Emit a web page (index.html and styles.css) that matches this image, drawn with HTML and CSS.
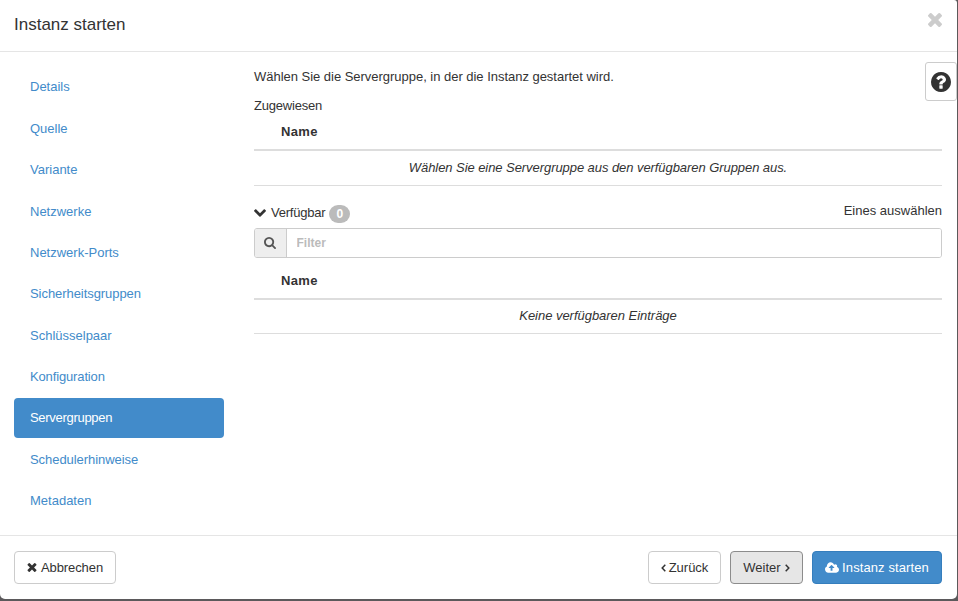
FILE: index.html
```html
<!DOCTYPE html>
<html lang="de">
<head>
<meta charset="utf-8">
<title>Instanz starten</title>
<link rel="stylesheet" href="styles.css">
</head>
<body>
<svg width="0" height="0" class="defs">
  <symbol id="times" viewBox="302 366 1188 1188"><path d="M1490 1322q0 40-28 68l-136 136q-28 28-68 28t-68-28l-294-294-294 294q-28 28-68 28t-68-28l-136-136q-28-28-28-68t28-68l294-294-294-294q-28-28-28-68t28-68l136-136q28-28 68-28t68 28l294 294 294-294q28-28 68-28t68 28l136 136q28 28 28 68t-28 68l-294 294 294 294q28 28 28 68z"/></symbol>
</svg>
<div class="modal">
  <header class="header">
    <h1>Instanz starten</h1>
    <svg class="close"><use href="#times"/></svg>
  </header>
  <div class="body">
    <nav class="steps">
      <a>Details</a>
      <a>Quelle</a>
      <a>Variante</a>
      <a>Netzwerke</a>
      <a>Netzwerk-Ports</a>
      <a class="snug">Sicherheitsgruppen</a>
      <a>Schlüsselpaar</a>
      <a class="tight">Konfiguration</a>
      <a class="active">Servergruppen</a>
      <a class="snug">Schedulerhinweise</a>
      <a>Metadaten</a>
    </nav>
    <main class="content">
      <p class="intro">Wählen Sie die Servergruppe, in der die Instanz gestartet wird.</p>
      <div class="label">Zugewiesen</div>
      <div class="thead">Name</div>
      <div class="empty first">Wählen Sie eine Servergruppe aus den verfügbaren Gruppen aus.</div>
      <div class="available">
        <svg class="chevron" viewBox="90 533 1612 1035"><path d="M1683 808l-742 741q-19 19-45 19t-45-19l-742-741q-19-19-19-45.500t19-45.500l166-165q19-19 45-19t45 19l531 531 531-531q19-19 45-19t45 19l166 165q19 19 19 45.500t-19 45.500z"/></svg>
        <span class="available-title">Verfügbar</span>
        <span class="badge">0</span>
        <span class="hint">Eines auswählen</span>
      </div>
      <div class="filter">
        <span class="addon"><svg viewBox="64 128 1664 1664"><path d="M1216 832q0-185-131.500-316.500t-316.500-131.500-316.500 131.500-131.500 316.500 131.500 316.500 316.500 131.500 316.500-131.500 131.500-316.500zm512 832q0 52-38 90t-90 38q-54 0-90-38l-343-342q-179 124-399 124-143 0-273.500-55.500t-225-150-150-225-55.500-273.500 55.500-273.500 150-225 225-150 273.500-55.500 273.500 55.500 225 150 150 225 55.500 273.500q0 220-124 399l343 343q37 37 37 90z"/></svg></span>
        <input type="text" placeholder="Filter">
      </div>
      <div class="thead">Name</div>
      <div class="empty">Keine verfügbaren Einträge</div>
    </main>
    <button class="help"><svg viewBox="128 128 1536 1536"><path d="M1024 1376v-192q0-14-9-23t-23-9h-192q-14 0-23 9t-9 23v192q0 14 9 23t23 9h192q14 0 23-9t9-23zm256-672q0-88-55.500-163t-138.500-116-170-41q-243 0-371 213-15 24 8 42l132 100q7 6 19 6 16 0 25-12 53-68 86-92 34-24 86-24 48 0 85.500 26t37.500 59q0 38-20 61t-68 45q-63 28-115.500 86.500t-52.500 125.500v36q0 14 9 23t23 9h192q14 0 23-9t9-23q0-19 21.500-49.500t54.500-49.500q32-18 49-28.500t46-35 44.500-48 28-60.500 12.500-81zm384 192q0 209-103 385.500t-279.500 279.500-385.500 103-385.500-103-279.500-279.500-103-385.500 103-385.500 279.500-279.500 385.500-103 385.500 103 279.500 279.500 103 385.500z"/></svg></button>
  </div>
  <footer class="footer">
    <button class="btn cancel"><svg class="x"><use href="#times"/></svg><span>Abbrechen</span></button>
    <button class="btn back"><svg class="angle" viewBox="0 0 5 8"><path d="M4.300.8 1.200 4l3.100 3.200"/></svg><span>Zurück</span></button>
    <button class="btn next"><span>Weiter</span><svg class="angle" viewBox="0 0 5 8"><path d="M.7.8 3.800 4 .7 7.200"/></svg></button>
    <button class="btn launch"><svg class="cloud" viewBox="-64 128 1920 1408"><path d="M1216 864q0-14-9-23l-352-352q-9-9-23-9t-23 9l-351 351q-10 12-10 24 0 14 9 23t23 9h224v352q0 13 9.500 22.500t22.500 9.500h192q13 0 22.500-9.500t9.500-22.500v-352h224q13 0 22.500-9.500t9.500-22.500zm640 288q0 159-112.500 271.500t-271.500 112.500h-1088q-185 0-316.500-131.500t-131.500-316.500q0-130 70-240t188-165q-2-30-2-43 0-212 150-362t362-150q156 0 285.500 87t188.500 231q71-62 166-62 106 0 181 75t75 181q0 76-41 138 130 31 213.500 135.500t83.500 238.500z"/></svg><span>Instanz starten</span></button>
  </footer>
</div>
</body>
</html>
```
FILE: styles.css
```css
* { box-sizing: border-box; }
body {
  margin: 0;
  height: 601px;
  overflow: hidden;
  background: #5b595b;
  color: #333;
  font: 13px/18px "Liberation Sans", Arial, sans-serif;
}
svg { display: block; fill: currentColor; flex: none; }
.defs { position: absolute; }
.modal {
  display: flex;
  flex-direction: column;
  width: 957px;
  height: 599px;
  background: #fff;
  border-radius: 0 3px 5px 5px;
}
.header {
  display: flex;
  justify-content: space-between;
  height: 52px;
  padding: 13px 15px 0 14px;
  border-bottom: 1px solid #e5e5e5;
}
h1 { margin: 0; font-size: 17px; line-height: 24px; font-weight: 400; }
.close { width: 14px; height: 14px; color: #ccc; }
.body { position: relative; display: flex; flex: 1; padding: 14.500px 15px 0 14px; }
.steps {
  display: flex;
  flex-direction: column;
  gap: 1.360px;
  width: 210px;
  margin-right: 30px;
  padding-top: 0.960px;
}
.steps a {
  height: 40px;
  padding: 11px 16px;
  border-radius: 4px;
  color: #428bca;
}
.steps .snug { letter-spacing: -0.060px; }
.steps .tight { letter-spacing: -0.140px; }
.steps .active { background: #428bca; color: #fff; letter-spacing: -0.300px; }
.content { flex: 1; }
.intro { margin: 1.500px 0 11px; letter-spacing: -0.025px; }
.label { height: 18px; letter-spacing: -0.200px; }
.thead {
  height: 36px;
  padding: 8px 27px;
  border-bottom: 2px solid #ddd;
  font-weight: 700;
  letter-spacing: 0.350px;
}
.empty {
  height: 34px;
  padding-top: 7px;
  border-bottom: 1px solid #ddd;
  text-align: center;
  font-style: italic;
  letter-spacing: -0.030px;
}
.empty.first { height: 35px; padding-top: 8px; letter-spacing: -0.065px; }
.available { display: flex; align-items: center; height: 42px; padding-top: 12px; }
.chevron { width: 12px; height: 8px; margin-right: 5px; }
.available-title { letter-spacing: -0.220px; }
.badge {
  width: 21px;
  height: 18px;
  margin: 1px 0 0 4px;
  border-radius: 9px;
  background: #bbb;
  color: #fff;
  font-size: 12px;
  font-weight: 700;
  text-align: center;
}
.hint { margin: -4px 0 0 auto; }
.filter {
  display: flex;
  height: 30px;
  margin-bottom: 6px;
  border: 1px solid #ccc;
  border-radius: 3px;
  overflow: hidden;
}
.addon {
  width: 32px;
  padding: 8px 9px;
  border-right: 1px solid #ccc;
  background: #eee;
  color: #555;
}
.addon svg { width: 12px; height: 12px; }
input {
  flex: 1;
  border: 0;
  padding: 0 9.500px;
  outline: 0;
  background: #fff;
  font: 700 12px "Liberation Sans", Arial, sans-serif;
}
input::placeholder { color: #bbb; opacity: 1; }
.help {
  position: absolute;
  top: 10px;
  right: 0;
  width: 32px;
  height: 39px;
  padding: 0 0 0 5px;
  border: 1px solid #ccc;
  border-radius: 3px;
  background: #fff;
  color: #333;
}
.help svg { width: 20px; height: 20px; }
.footer {
  display: flex;
  height: 64px;
  padding: 15px 15px 0 14px;
  border-top: 1px solid #e5e5e5;
}
.btn {
  display: flex;
  align-items: center;
  justify-content: center;
  height: 33px;
  padding: 0;
  border: 1px solid #ccc;
  border-radius: 4px;
  background: #fff;
  color: #333;
  font: 13px/18px "Liberation Sans", Arial, sans-serif;
}
.cancel { width: 102px; gap: 4px; margin-right: auto; letter-spacing: -0.080px; }
.x { width: 10px; height: 9px; }
.angle { width: 5px; height: 8px; fill: none; stroke: currentColor; stroke-width: 1.500; }
.back { width: 73px; gap: 3px; }
.next { width: 73px; gap: 4px; margin: 0 9px; border-color: #8c8c8c; background: #e6e6e6; }
.launch { width: 130px; gap: 3px; border-color: #357ebd; background: #428bca; color: #fff; letter-spacing: 0.100px; }
.cloud { width: 14px; height: 11px; }
```
